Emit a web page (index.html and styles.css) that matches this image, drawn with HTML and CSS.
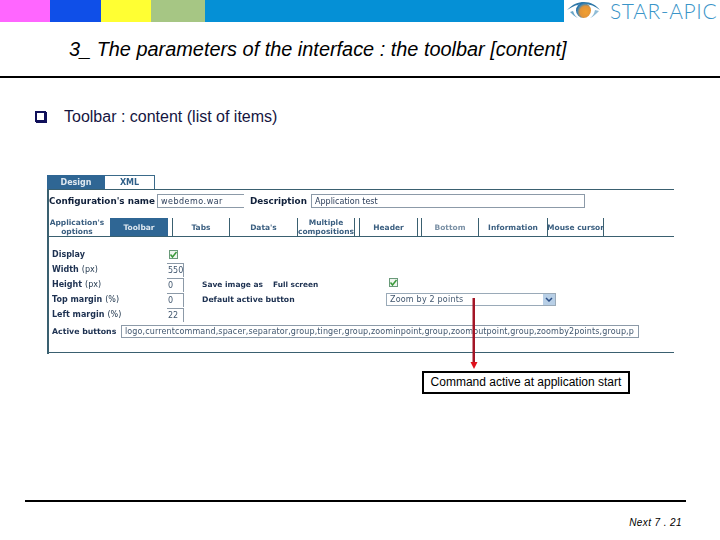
FILE: index.html
```html
<!DOCTYPE html>
<html lang="en">
<head>
<meta charset="utf-8">
<title>The parameters of the interface</title>
<link rel="stylesheet" href="styles.css">
</head>
<body>
<div class="page">
  <header class="topbar">
    <span class="swatch pink"></span>
    <span class="swatch blue"></span>
    <span class="swatch yellow"></span>
    <span class="swatch green"></span>
    <span class="swatch sky"></span>
    <div class="logo">
      <svg class="eye" width="38" height="20" viewBox="0 0 38 20">
        <defs>
          <radialGradient id="globe" cx="0.65" cy="0.6" r="0.7">
            <stop offset="0" stop-color="#f2a030"/>
            <stop offset="0.55" stop-color="#e29338"/>
            <stop offset="0.8" stop-color="#3f86b4"/>
            <stop offset="1" stop-color="#0f5c9a"/>
          </radialGradient>
        </defs>
        <path d="M0 9 C6 3 11 1 17 1 C24 1 29 4 33 9 C28 5 23 3 17 3 C11 3 6 5 0 9 Z" fill="#2f78a8"/>
        <path d="M3 11 C6 14 8 16 11 17 C8 15 7 13 6 10 Z" fill="#6aa6c8"/>
        <path d="M32 10 C29 13 26 16 23 17 C26 15 27 13 28 9 Z" fill="#8fbcd6"/>
        <circle cx="16.500" cy="9.500" r="7.500" fill="url(#globe)"/>
      </svg>
      <span class="brand">STAR-APIC</span>
    </div>
  </header>

  <h1 class="title">3_ The parameters of the interface : the toolbar [content]</h1>

  <p class="lead"><span class="box"></span><span>Toolbar : content (list of items)</span></p>

  <section class="panel">
    <div class="tabs">
      <span class="tab on">Design</span>
      <span class="tab">XML</span>
    </div>
    <div class="body">
      <div class="config">
        <label class="big name-label">Configuration's name</label>
        <span class="field name-field">webdemo.war</span>
        <label class="big desc-label">Description</label>
        <span class="field desc-field">Application test</span>
      </div>
      <nav class="subtabs">
        <span class="sub w58">Application's<br>options</span>
        <span class="sub w58 on ml4">Toolbar</span>
        <span class="sub w58 sep-both ml4">Tabs</span>
        <span class="sub w68 sep-r">Data's</span>
        <span class="sub w57 sep-r">Multiple<br>compositions</span>
        <span class="sub w59 sep-both ml4">Header</span>
        <span class="sub w58 sep-both ml3 pale">Bottom</span>
        <span class="sub w69 sep-r">Information</span>
        <span class="sub w56 sep-r">Mouse cursor</span>
      </nav>
      <div class="form">
        <div class="lbl"><b>Display</b></div>
        <div class="ctl"><span class="check"><svg width="9" height="9" viewBox="0 0 9 9"><path d="M1.500 4.500 L3.500 7 L7.500 2" fill="none" stroke="#3a9a3a" stroke-width="1.500"/></svg></span></div>
        <div></div>
        <div></div>

        <div class="lbl"><b>Width</b> (px)</div>
        <div class="ctl"><span class="num">550</span></div>
        <div></div>
        <div></div>

        <div class="lbl"><b>Height</b> (px)</div>
        <div class="ctl"><span class="num">0</span></div>
        <div class="lbl"><b class="save">Save image as</b><b class="full">Full screen</b></div>
        <div class="ctl"><span class="check third"><svg width="9" height="9" viewBox="0 0 9 9"><path d="M1.500 4.500 L3.500 7 L7.500 2" fill="none" stroke="#3a9a3a" stroke-width="1.500"/></svg></span></div>

        <div class="lbl"><b>Top margin</b> (%)</div>
        <div class="ctl"><span class="num">0</span></div>
        <div class="lbl"><b class="default">Default active button</b></div>
        <div class="ctl"><span class="select"><span>Zoom by 2 points</span><span class="drop"><svg width="8" height="5" viewBox="0 0 8 5"><path d="M1 1 L4 4 L7 1" fill="none" stroke="#2b4f86" stroke-width="1.500"/></svg></span></span></div>

        <div class="lbl"><b>Left margin</b> (%)</div>
        <div class="ctl"><span class="num">22</span></div>
        <div></div>
        <div></div>
      </div>
      <div class="active">
        <label class="lbl active-label"><b>Active buttons</b></label>
        <span class="field active-field">logo,currentcommand,spacer,separator,group,tinger,group,zoominpoint,group,zoomoutpoint,group,zoomby2points,group,p</span>
      </div>
    </div>
  </section>

  <svg class="arrow" width="12" height="74" viewBox="0 0 12 74">
    <rect x="4.500" y="0" width="2.500" height="66" fill="#a31526"/>
    <path d="M2.500 64 H9.500 L6 71 Z" fill="#e0101c"/>
  </svg>
  <div class="callout">Command active at application start</div>

  <footer class="footer">
    <span class="next">Next 7 . 21</span>
  </footer>
</div>
</body>
</html>
```

FILE: styles.css
```css
* { box-sizing: border-box; }
html, body { margin: 0; padding: 0; background: #fff; }
.page {
  position: relative;
  width: 720px;
  height: 540px;
  overflow: hidden;
  font-family: "Liberation Sans", Arial, sans-serif;
}

/* top colour strip */
.topbar { display: flex; height: 22px; }
.swatch { display: block; height: 22px; }
.pink { width: 50px; background: #ff66ff; }
.blue { width: 51px; background: #0f4fe8; }
.yellow { width: 50px; background: #ffff33; }
.green { width: 54px; background: #a6c684; }
.sky { width: 359px; background: #0590d6; }
.logo { display: flex; align-items: center; width: 156px; padding-left: 3px; }
.eye { flex: none; }
.brand {
  margin-left: 5px;
  font-family: "Lato", sans-serif;
  font-weight: 300;
  font-size: 21px;
  line-height: 22px;
  letter-spacing: 0.6px;
  color: #3a94c8;
  white-space: nowrap;
}

/* title */
.title {
  margin: 0;
  height: 56px;
  padding: 16px 0 0 69px;
  border-bottom: 2px solid #000;
  font-size: 19.900px;
  line-height: 22px;
  font-weight: normal;
  font-style: italic;
  color: #000;
  white-space: nowrap;
}

.lead {
  display: flex;
  align-items: center;
  margin: 29px 0 0 35px;
  height: 20px;
  font-size: 16px;
  color: #15153f;
}
.box {
  width: 11px;
  height: 11px;
  margin: 0 18px 2px 0;
  border: 2px solid #10105a;
  box-shadow: 1px 1px 0 #10105a;
}

/* embedded form screenshot */
.panel {
  margin: 48px 0 0 47px;
  width: 627px;
  height: 179px;
  font-family: "DejaVu Sans", Verdana, sans-serif;
  font-size: 8px;
  color: #24405c;
  filter: blur(0.45px);
}
.tabs { display: flex; height: 14px; }
.tab {
  display: flex;
  align-items: center;
  justify-content: center;
  width: 50px;
  font-weight: bold;
  color: #2f5f88;
  border: 1px solid #3a6a8a;
  border-bottom: 0;
  border-left: 0;
}
.tab.on { width: 58px; background: #2f6694; color: #dfe8f0; border: 0; }
.body {
  height: 165px;
  padding: 4px 0 0;
  border-top: 1px solid #3a6070;
  border-left: 2px solid #3a6070;
  position: relative;
}
.config { display: flex; align-items: center; height: 14px; }
.big { font-size: 8.800px; font-weight: bold; color: #10203a; white-space: nowrap; }
.name-label { width: 108px; }
.desc-label { width: 61px; margin-left: 6px; }
.field {
  display: flex;
  align-items: center;
  padding-left: 3px;
  height: 14px;
  border: 1px solid #8c9aa8;
  color: #2a3c58;
  overflow: hidden;
  white-space: nowrap;
}
.name-field { width: 87px; border-right: 0; letter-spacing: 0.5px; }
.desc-field { width: 274px; }

.subtabs {
  display: flex;
  height: 19px;
  margin: 10px 0 0 -1px;
  border-bottom: 1px solid #3a6070;
}
.sub {
  display: flex;
  align-items: center;
  justify-content: center;
  height: 18px;
  text-align: center;
  font-weight: bold;
  font-size: 7.500px;
  line-height: 9px;
  color: #3b5f80;
  white-space: nowrap;
  overflow: hidden;
}
.sub.on { background: #2f6694; color: #dfe8f0; }
.pale { color: #7a90a5; }
.sep-r { border-right: 1px solid #3a6070; }
.sep-both { border-left: 1px solid #3a6070; border-right: 1px solid #3a6070; }
.ml3 { margin-left: 3px; }
.ml4 { margin-left: 4px; }
.w56 { width: 56px; }
.w57 { width: 57px; }
.w58 { width: 58px; }
.w59 { width: 59px; }
.w68 { width: 68px; }
.w69 { width: 69px; }

.form {
  display: grid;
  grid-template-columns: 115px 35px 184px 170px;
  grid-auto-rows: 15px;
  margin: 10px 0 0 3px;
}
.lbl { display: flex; align-items: center; color: #22384f; white-space: nowrap; }
.lbl b { color: #1c3050; margin-right: 3px; }
.lbl .save { width: 71px; margin: 0; font-size: 7.500px; }
.lbl .full { margin: 0; font-size: 7.400px; }
.lbl .default { margin: 0; font-size: 7.700px; }
.ctl { display: flex; align-items: center; }
.check {
  display: block;
  width: 9px;
  height: 9px;
  margin-left: 2px;
  border: 1px solid #6a9a7a;
  background: #eef5ee;
}
.check svg { display: block; margin: -1px; }
.third { margin-left: 3px; margin-top: -4px; }
.num {
  display: block;
  width: 17px;
  height: 14px;
  padding-left: 1px;
  line-height: 14px;
  border-top: 1px solid #8c9aa8;
  border-right: 1px solid #8c9aa8;
  color: #40566e;
  overflow: hidden;
}
.select {
  display: flex;
  align-items: center;
  justify-content: space-between;
  width: 170px;
  height: 13px;
  padding-left: 3px;
  border: 1px solid #9aaab8;
  color: #40566e;
  letter-spacing: 0.2px;
}
.drop {
  display: flex;
  align-items: center;
  justify-content: center;
  width: 12px;
  height: 11px;
  background: #b8cfe6;
}
.active { display: flex; align-items: center; height: 13px; margin: 3px 0 0 3px; }
.active-label { width: 69px; font-size: 7.800px; }
.active-field {
  width: 518px;
  height: 13px;
  padding-left: 3px;
  color: #40566e;
  letter-spacing: 0.12px;
}
.panel .body::after {
  content: "";
  position: absolute;
  left: 0;
  right: 0;
  bottom: 1px;
  height: 1px;
  background: #3a6070;
}

/* overlays */
.arrow { position: absolute; left: 468px; top: 298px; }
.callout {
  position: absolute;
  left: 422px;
  top: 371px;
  width: 208px;
  height: 23px;
  border: 2px solid #000;
  background: #fff;
  font-size: 12px;
  line-height: 19px;
  text-align: center;
  color: #000;
  white-space: nowrap;
}

/* footer */
.footer {
  position: absolute;
  left: 25px;
  top: 500px;
  width: 661px;
  height: 40px;
  border-top: 2px solid #000;
  text-align: right;
}
.next {
  display: block;
  padding: 15px 4px 0 0;
  font-family: "Liberation Sans", sans-serif;
  font-style: italic;
  font-size: 10px;
  line-height: 12px;
  letter-spacing: 0.4px;
  color: #000;
}
```
